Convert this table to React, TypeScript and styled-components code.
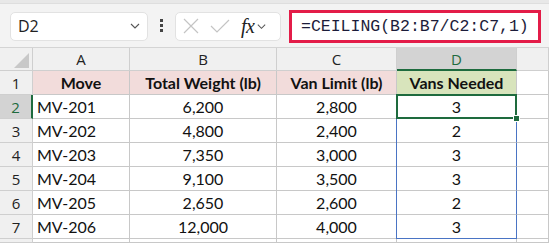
import React from 'react';
import styled, { createGlobalStyle } from 'styled-components';

const GlobalStyle = createGlobalStyle`
  html, body {
    margin: 0;
    padding: 0;
    background: #ffffff;
  }
  body {
    width: 549px;
    height: 243px;
    overflow: hidden;
    font-family: Lato, 'Liberation Sans', sans-serif;
  }
`;

const rows = [
  ['MV-201', '6,200', '2,800', '3'],
  ['MV-202', '4,800', '2,400', '2'],
  ['MV-203', '7,350', '3,000', '3'],
  ['MV-204', '9,100', '3,500', '3'],
  ['MV-205', '2,650', '2,600', '2'],
  ['MV-206', '12,000', '4,000', '3'],
];

function Chevron({ size = 12 }: { size?: number }) {
  return (
    <svg width={size} height={size} viewBox="0 0 12 12">
      <polyline points="2,4 6,8 10,4" fill="none" stroke="#555" strokeWidth="1.1" />
    </svg>
  );
}

export default function App() {
  return (
    <>
      <GlobalStyle />
      <Page>
        <TopStrip />
        <FormulaBar>
          <NameBox>
            <span>D2</span>
            <Chevron />
          </NameBox>
          <Grip>
            <i />
            <i />
            <i />
          </Grip>
          <ActionBox>
            <svg width="16" height="16" viewBox="0 0 16 16">
              <path d="M1 1 L15 15 M15 1 L1 15" stroke="#c4c4c4" strokeWidth="1.2" fill="none" />
            </svg>
            <svg width="20" height="16" viewBox="0 0 20 16">
              <polyline points="1,8 7,14 19,2" stroke="#c4c4c4" strokeWidth="1.2" fill="none" />
            </svg>
            <Fx>fx</Fx>
            <Chevron size={11} />
          </ActionBox>
          <FormulaInput>=CEILING(B2:B7/C2:C7,1)</FormulaInput>
        </FormulaBar>
        <Sheet>
          <Corner>
            <svg width="20" height="20" viewBox="0 0 20 20">
              <polygon points="19,4 19,19 4,19" fill="#c8c8c8" />
            </svg>
          </Corner>
          <ColHead>A</ColHead>
          <ColHead>B</ColHead>
          <ColHead>C</ColHead>
          <ColHead $active>D</ColHead>
          <ColHead />

          <RowHead>1</RowHead>
          <TitleCell $tone="pink">Move</TitleCell>
          <TitleCell $tone="pink">Total Weight (lb)</TitleCell>
          <TitleCell $tone="pink">Van Limit (lb)</TitleCell>
          <TitleCell $tone="green">Vans Needed</TitleCell>
          <Cell />

          {rows.map((r, i) => (
            <React.Fragment key={r[0]}>
              <RowHead $active={i === 0}>{i + 2}</RowHead>
              <Cell $left>{r[0]}</Cell>
              <Cell>{r[1]}</Cell>
              <Cell>{r[2]}</Cell>
              <RangeCell $first={i === 0} $last={i === rows.length - 1}>
                {r[3]}
              </RangeCell>
              <Cell />
            </React.Fragment>
          ))}

          <RowHead />
          <Cell />
          <Cell />
          <Cell />
          <Cell />
          <Cell />
        </Sheet>
      </Page>
    </>
  );
}

const Page = styled.div`
  width: 549px;
  height: 243px;
  display: flex;
  flex-direction: column;
  background: #f3f3f3;
`;

const TopStrip = styled.div`
  height: 3px;
  background: #e8e8e8;
  border-bottom: 1px solid #dedede;
`;

const FormulaBar = styled.div`
  height: 44px;
  display: flex;
  align-items: center;
  padding: 0 8px 0 10px;
  box-sizing: border-box;
  border-bottom: 1px solid #d4d4d4;
`;

const NameBox = styled.div`
  width: 138px;
  height: 29px;
  box-sizing: border-box;
  background: #fff;
  border: 1px solid #e2e2e2;
  border-radius: 5px;
  display: flex;
  align-items: center;
  justify-content: space-between;
  padding: 0 6px 0 7px;
  font-family: 'Open Sans', 'Noto Sans', sans-serif;
  font-size: 16px;
  color: #222;
  margin-top: 1px;
`;

const Grip = styled.div`
  width: 27px;
  display: flex;
  flex-direction: column;
  align-items: center;
  gap: 2px;

  i {
    display: block;
    width: 3px;
    height: 3px;
    background: #444;
  }
`;

const ActionBox = styled.div`
  width: 106px;
  height: 29px;
  box-sizing: border-box;
  background: #fff;
  border: 1px solid #e2e2e2;
  border-radius: 5px;
  display: flex;
  align-items: center;
  padding: 0 3px 0 7px;
  margin-top: 1px;

  svg:nth-child(2) {
    margin-left: 11px;
  }
`;

const Fx = styled.span`
  font-family: 'Liberation Serif', serif;
  font-style: italic;
  font-size: 20px;
  color: #222;
  margin-left: 11px;
  margin-right: 2px;
  letter-spacing: -0.5px;
`;

const FormulaInput = styled.div`
  margin-left: 8px;
  width: 252px;
  height: 33px;
  box-sizing: border-box;
  border: 3px solid #e31c48;
  background: #fff;
  display: flex;
  align-items: center;
  padding-left: 9px;
  font-family: 'Liberation Mono', monospace;
  font-size: 16.5px;
  color: #1c1c3a;
  white-space: nowrap;
  margin-top: 1px;
`;

const Sheet = styled.div`
  flex: 1;
  display: grid;
  grid-template-columns: 33px 97px 147px 120px 120px 1fr;
  grid-template-rows: 23px repeat(7, 24px) 1fr;
  background: #fff;
  font-size: 16px;
  color: #111;
`;

const Corner = styled.div`
  background: #f0f0f0;
  border-right: 1px solid #cfcfcf;
  border-bottom: 1px solid #cfcfcf;
  display: flex;
  align-items: flex-end;
  justify-content: flex-end;
  padding: 0 2px 1px 0;
`;

const ColHead = styled.div<{ $active?: boolean }>`
  background: ${(p) => (p.$active ? '#d3d3d3' : '#f0f0f0')};
  color: ${(p) => (p.$active ? '#1e6b3e' : '#222')};
  border-right: 1px solid #cfcfcf;
  border-bottom: ${(p) => (p.$active ? '2px solid #1e6b3e' : '1px solid #cfcfcf')};
  display: flex;
  align-items: center;
  justify-content: center;
  font-family: 'Open Sans', 'Noto Sans', sans-serif;
  font-size: 15px;
`;

const RowHead = styled.div<{ $active?: boolean }>`
  background: ${(p) => (p.$active ? '#d3d3d3' : '#f0f0f0')};
  color: ${(p) => (p.$active ? '#1e6b3e' : '#222')};
  border-right: ${(p) => (p.$active ? '2px solid #1e6b3e' : '1px solid #cfcfcf')};
  border-bottom: 1px solid #cfcfcf;
  display: flex;
  align-items: center;
  justify-content: center;
  font-family: 'Open Sans', 'Noto Sans', sans-serif;
  font-size: 15px;
`;

const Cell = styled.div<{ $left?: boolean }>`
  border-right: 1px solid #c8c8c8;
  border-bottom: 1px solid #c8c8c8;
  display: flex;
  align-items: center;
  justify-content: ${(p) => (p.$left ? 'flex-start' : 'center')};
  padding: 0 4px;
  white-space: nowrap;
`;

const TitleCell = styled(Cell)<{ $tone: 'pink' | 'green' }>`
  background: ${(p) => (p.$tone === 'pink' ? '#f2dcdb' : '#d8e4bc')};
  font-weight: bold;
`;

const RangeCell = styled(Cell)<{ $first?: boolean; $last?: boolean }>`
  position: relative;
  border-right: 1px solid #4a74c4;
  border-bottom: ${(p) => (p.$last ? '1px solid #4a74c4' : '1px solid #c8c8c8')};
  box-shadow: -1px 0 0 #4a74c4;

  ${(p) =>
    p.$first &&
    `
    &::after {
      content: '';
      position: absolute;
      inset: -1px -1px -1px -1px;
      border: 2px solid #1e6b3e;
    }
    &::before {
      content: '';
      position: absolute;
      right: -4px;
      bottom: -4px;
      width: 5px;
      height: 5px;
      background: #1e6b3e;
      border: 1px solid #fff;
      z-index: 2;
    }
  `}
`;
